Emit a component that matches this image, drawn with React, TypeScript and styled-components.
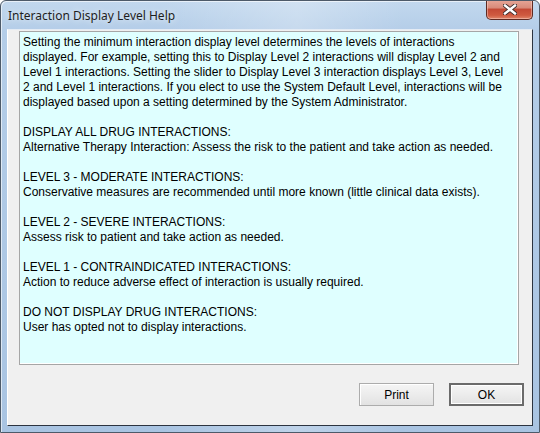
import React from "react";
import styled, { createGlobalStyle } from "styled-components";

const intro = [
  "Setting the minimum interaction display level determines the levels of interactions",
  "displayed. For example, setting this to Display Level 2 interactions will display Level 2 and",
  "Level 1 interactions. Setting the slider to Display Level 3 interaction displays Level 3, Level",
  "2 and Level 1 interactions. If you elect to use the System Default Level, interactions will be",
  "displayed based upon a setting determined by the System Administrator.",
];

const levels = [
  {
    heading: "DISPLAY ALL DRUG INTERACTIONS:",
    text: "Alternative Therapy Interaction: Assess the risk to the patient and take action as needed.",
  },
  {
    heading: "LEVEL 3 - MODERATE INTERACTIONS:",
    text: "Conservative measures are recommended until more known (little clinical data exists).",
  },
  {
    heading: "LEVEL 2 - SEVERE INTERACTIONS:",
    text: "Assess risk to patient and take action as needed.",
  },
  {
    heading: "LEVEL 1 - CONTRAINDICATED INTERACTIONS:",
    text: "Action to reduce adverse effect of interaction is usually required.",
  },
  {
    heading: "DO NOT DISPLAY DRUG INTERACTIONS:",
    text: "User has opted not to display interactions.",
  },
];

const App: React.FC = () => {
  return (
    <>
      <GlobalStyle />
      <Window>
        <TitleBar>
          <Title>Interaction Display Level Help</Title>
          <CloseButton aria-label="Close">
            <svg width="14" height="11" viewBox="0 0 14 11">
              <path
                d="M2 1.5 L12 9.5 M12 1.5 L2 9.5"
                stroke="#3b2a28"
                strokeWidth="4.2"
                strokeLinecap="square"
              />
              <path
                d="M2 1.5 L12 9.5 M12 1.5 L2 9.5"
                stroke="#ffffff"
                strokeWidth="2.4"
                strokeLinecap="square"
              />
            </svg>
          </CloseButton>
        </TitleBar>
        <Client>
          <HelpBox>
            <Block>
              {intro.map((line) => (
                <Line key={line}>{line}</Line>
              ))}
            </Block>
            {levels.map((l) => (
              <Block key={l.heading}>
                <Line>{l.heading}</Line>
                <Line>{l.text}</Line>
              </Block>
            ))}
          </HelpBox>
          <ButtonRow>
            <DialogButton>Print</DialogButton>
            <DialogButton $default>OK</DialogButton>
          </ButtonRow>
        </Client>
      </Window>
    </>
  );
};

const GlobalStyle = createGlobalStyle`
  html, body {
    margin: 0;
    padding: 0;
    background: #ffffff;
  }
  body {
    font-family: "Liberation Sans", Arial, sans-serif;
  }
`;

const Window = styled.div`
  box-sizing: border-box;
  width: 540px;
  height: 433px;
  display: flex;
  flex-direction: column;
  border: 1px solid #4d5a69;
  border-radius: 6px 6px 0 0;
  background:
    linear-gradient(90deg, rgba(255,255,255,0) 30%, rgba(255,255,255,0.25) 55%, rgba(255,255,255,0) 75%),
    linear-gradient(180deg, #c2d8ee 0px, #b4cde8 30px, #a9c4e2 100%);
  box-shadow: inset 1px 1px 0 rgba(255, 255, 255, 0.6);
  overflow: hidden;
`;

const TitleBar = styled.div`
  height: 28px;
  display: flex;
  align-items: flex-start;
  justify-content: space-between;
  padding: 0 6px 0 7px;
`;

const Title = styled.div`
  margin-top: 6px;
  font-family: "Noto Sans", "Open Sans", sans-serif;
  font-size: 12px;
  color: #1e1e1e;
  text-shadow: 0 0 6px rgba(255, 255, 255, 0.9);
`;

const CloseButton = styled.div`
  box-sizing: border-box;
  width: 47px;
  height: 20px;
  margin-top: -1px;
  display: flex;
  align-items: center;
  justify-content: center;
  border: 1px solid #5e2a22;
  border-top: none;
  border-radius: 0 0 5px 5px;
  background: linear-gradient(
    180deg,
    #e7a798 0%,
    #d98b7a 40%,
    #c44a35 50%,
    #cf5a40 80%,
    #e0866a 100%
  );
  box-shadow: inset 0 0 0 1px rgba(255, 220, 210, 0.45);
`;

const Client = styled.div`
  flex: 1;
  display: flex;
  flex-direction: column;
  margin: 0 0 6px 6px;
  width: 524px;
  background: #f0f0f0;
  border-top: 1px solid #e4ebf4;
  border-left: 1px solid #ffffff;
  border-right: 1px solid #2c3440;
  border-bottom: 1px solid #2c3440;
`;

const HelpBox = styled.div`
  box-sizing: border-box;
  width: 500px;
  height: 334px;
  margin: 1px 0 0 11px;
  padding: 3px 2px 0 3px;
  background: #dfffff;
  border: 1px solid #a6a6a6;
  box-shadow: inset -1px -1px 0 #ffffff;
  font-size: 12px;
  line-height: 15px;
  color: #000000;
`;

const Block = styled.div`
  margin-bottom: 15px;
`;

const Line = styled.div`
  white-space: nowrap;
`;

const ButtonRow = styled.div`
  display: flex;
  justify-content: flex-end;
  gap: 15px;
  margin-top: 18px;
  padding-right: 8px;
`;

const DialogButton = styled.button<{ $default?: boolean }>`
  box-sizing: border-box;
  width: 75px;
  height: 23px;
  padding: 0;
  font-family: "Liberation Sans", Arial, sans-serif;
  font-size: 12px;
  color: #000000;
  border-radius: 0;
  border: ${(p) => (p.$default ? "2px solid #6b6b6b" : "1px solid #acacac")};
  background: linear-gradient(180deg, #f5f5f5 0%, #ececec 50%, #e2e2e2 100%);
  box-shadow: ${(p) =>
    p.$default ? "inset 0 0 0 1px #ffffff" : "inset 1px 1px 0 #ffffff"};
`;

export default App;
